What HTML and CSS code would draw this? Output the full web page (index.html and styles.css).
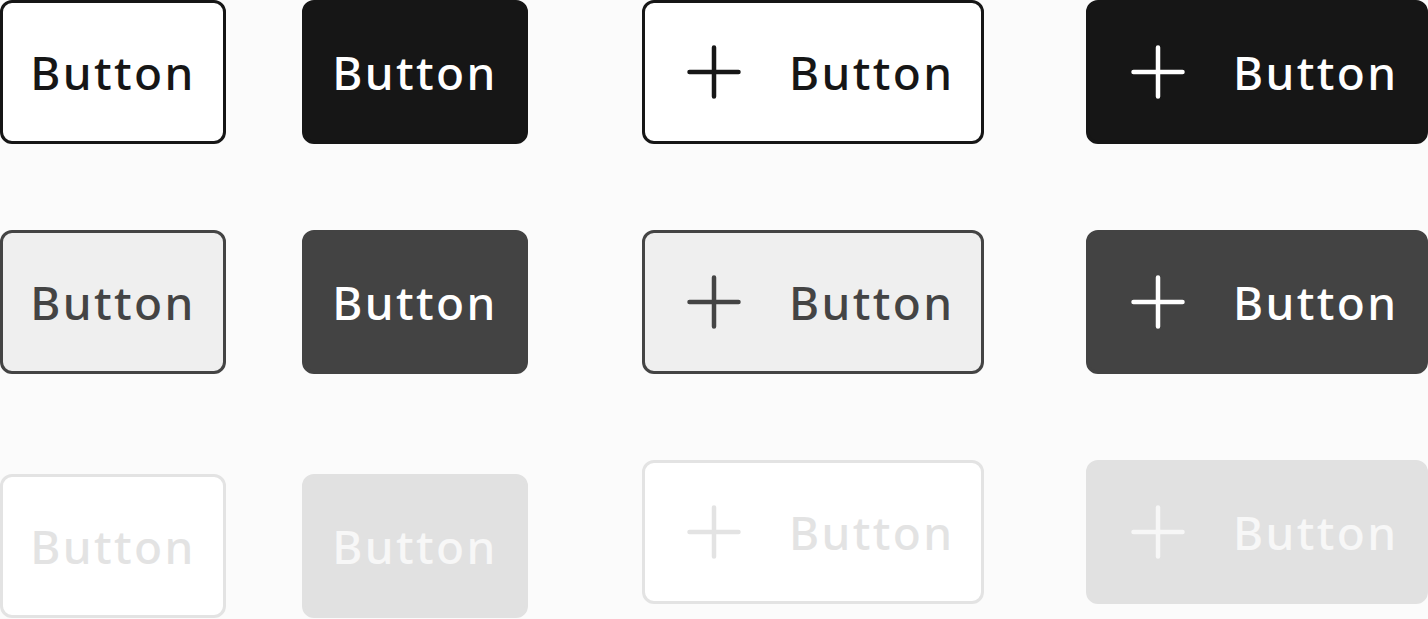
FILE: index.html
```html
<!DOCTYPE html>
<html lang="en">
<head>
<meta charset="utf-8">
<title>Buttons</title>
<link rel="stylesheet" href="styles.css">
</head>
<body>
<div class="grid">
  <button class="btn outline">Button</button>
  <button class="btn solid">Button</button>
  <button class="btn wide outline icon"><svg class="plus" viewBox="0 0 54 54"><path d="M27 2.5V51.5M2.5 27H51.5"/></svg><span>Button</span></button>
  <button class="btn wide solid icon"><svg class="plus" viewBox="0 0 54 54"><path d="M27 2.5V51.5M2.5 27H51.5"/></svg><span>Button</span></button>

  <button class="btn outline hover">Button</button>
  <button class="btn solid hover">Button</button>
  <button class="btn wide outline icon hover"><svg class="plus" viewBox="0 0 54 54"><path d="M27 2.5V51.5M2.5 27H51.5"/></svg><span>Button</span></button>
  <button class="btn wide solid icon hover"><svg class="plus" viewBox="0 0 54 54"><path d="M27 2.5V51.5M2.5 27H51.5"/></svg><span>Button</span></button>

  <button class="btn outline disabled shift">Button</button>
  <button class="btn solid disabled shift">Button</button>
  <button class="btn wide outline icon disabled"><svg class="plus" viewBox="0 0 54 54"><path d="M27 2.5V51.5M2.5 27H51.5"/></svg><span>Button</span></button>
  <button class="btn wide solid icon disabled"><svg class="plus" viewBox="0 0 54 54"><path d="M27 2.5V51.5M2.5 27H51.5"/></svg><span>Button</span></button>
</div>
</body>
</html>
```

FILE: styles.css
```css
html, body {
  margin: 0;
  padding: 0;
  background: #fbfbfb;
}

.grid {
  display: grid;
  grid-template-columns: 302px 340px 444px 342px;
  grid-template-rows: 144px 144px 158px;
  row-gap: 86px;
  align-items: start;
  justify-items: start;
}

.btn {
  box-sizing: border-box;
  width: 226px;
  height: 144px;
  margin: 0;
  padding: 0;
  border: 3px solid #161616;
  border-radius: 12px;
  display: flex;
  align-items: center;
  justify-content: center;
  font-family: "Noto Sans", "Open Sans", sans-serif;
  font-size: 46px;
  font-weight: 500;
  letter-spacing: 2.4px;
  line-height: 1;
  cursor: pointer;
}

.btn > span {
  margin-right: -2.4px;
}

.btn.wide {
  width: 342px;
}

.btn.icon {
  justify-content: flex-start;
  padding-left: 42px;
  gap: 48px;
}

.plus {
  width: 54px;
  height: 54px;
  flex: none;
  fill: none;
  stroke: currentColor;
  stroke-width: 4.5;
  stroke-linecap: round;
}

.outline {
  background: #ffffff;
  color: #161616;
  border-color: #161616;
}

.solid {
  background: #161616;
  color: #ffffff;
  border-color: #161616;
}

.outline.hover {
  background: #efefef;
  color: #444444;
  border-color: #444444;
}

.solid.hover {
  background: #434343;
  color: #ffffff;
  border-color: #434343;
}

.outline.disabled {
  background: #ffffff;
  color: #e3e3e3;
  border-color: #e3e3e3;
}

.solid.disabled {
  background: #e1e1e1;
  color: #f7f7f7;
  border-color: #e1e1e1;
}

.shift {
  margin-top: 14px;
}
```
